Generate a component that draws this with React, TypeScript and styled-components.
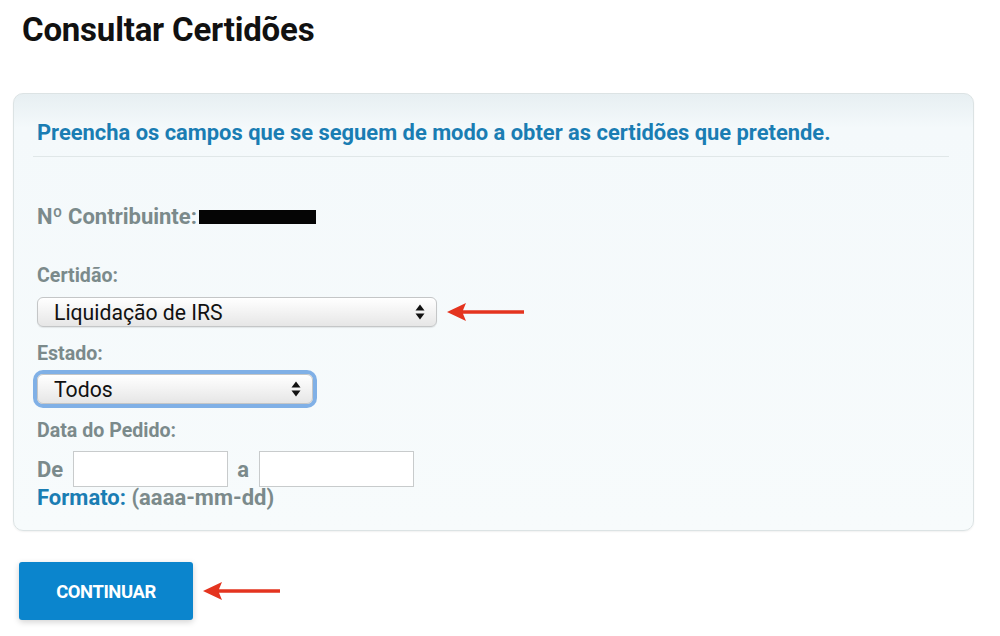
import React from "react";
import styled, { createGlobalStyle } from "styled-components";

const Global = createGlobalStyle`
  html, body { margin: 0; padding: 0; background: #ffffff; }
  body { font-family: Roboto, "Liberation Sans", Arial, sans-serif; }
`;

const Page = styled.div`
  width: 1000px;
  height: 636px;
  box-sizing: border-box;
  padding: 13px 26px 0 13px;
  display: flex;
  flex-direction: column;
  align-items: flex-start;
`;

const Title = styled.h1`
  margin: 0 0 0 9px;
  font-size: 33px;
  line-height: 34px;
  font-weight: 700;
  color: #111;
  letter-spacing: -0.2px;
`;

const Panel = styled.section`
  margin-top: 46px;
  width: 961px;
  height: 438px;
  box-sizing: border-box;
  border: 1px solid #dce3e4;
  border-radius: 10px;
  background: linear-gradient(to bottom, #e7eff2 0px, #f4f9fb 34px, #f7fbfc 100%);
  box-shadow: 0 1px 2px rgba(0, 0, 0, 0.06);
  padding: 27px 24px 0 23px;
  display: flex;
  flex-direction: column;
  align-items: flex-start;
`;

const Intro = styled.p`
  margin: 0;
  font-size: 21.9px;
  line-height: 24px;
  font-weight: 700;
  color: #1a7db3;
`;

const Divider = styled.hr`
  align-self: stretch;
  margin: 11px 0 0 -4px;
  border: 0;
  height: 1px;
  background: #e0e7e8;
`;

const InfoLine = styled.div<{ $mt: number }>`
  margin-top: ${(p) => p.$mt}px;
  display: flex;
  align-items: center;
  font-size: 22px;
  line-height: 22px;
  font-weight: 700;
  color: #7b8a8b;
`;

const Redacted = styled.span`
  display: inline-block;
  width: 117px;
  height: 14px;
  margin-left: 2px;
  background: #050505;
`;

const Label = styled.div<{ $mt: number }>`
  margin-top: ${(p) => p.$mt}px;
  font-size: 19.6px;
  line-height: 22px;
  font-weight: 700;
  color: #7b8a8b;
`;

const SelectRow = styled.div<{ $mt: number }>`
  margin-top: ${(p) => p.$mt}px;
  display: flex;
  align-items: center;
  gap: 10px;
`;

const SelectBox = styled.div<{ $w: number; $focus?: boolean }>`
  width: ${(p) => p.$w}px;
  height: 30px;
  box-sizing: border-box;
  border: 1px solid #c4c6c7;
  border-radius: 6px;
  background: linear-gradient(to bottom, #ffffff 0%, #f4f4f4 45%, #e6e6e6 100%);
  display: flex;
  align-items: center;
  justify-content: space-between;
  padding: 0 11px 0 16px;
  font-size: 21.2px;
  color: #111;
  box-shadow: ${(p) =>
    p.$focus
      ? "0 0 0 4px #80b0e6, inset 0 1px 0 #fff"
      : "0 1px 1px rgba(0,0,0,0.08), inset 0 1px 0 #fff"};
`;

const Arrows = () => (
  <svg width="10" height="16" viewBox="0 0 10 16">
    <path d="M5 0.5 L9.5 6.6 L0.5 6.6 Z" fill="#111" />
    <path d="M0.5 9.4 L9.5 9.4 L5 15.5 Z" fill="#111" />
  </svg>
);

const RedArrow = () => (
  <svg width="78" height="20" viewBox="0 0 78 20">
    <path d="M0 10 L19 1 L16 8.3 L77 8.3 L77 11.7 L16 11.7 L19 19 Z" fill="#e4341f" />
  </svg>
);

const DateRow = styled.div`
  margin-top: 9px;
  display: flex;
  align-items: center;
  height: 36px;
  font-size: 22px;
  font-weight: 700;
  color: #7b8a8b;
`;

const DateInput = styled.div<{ $ml: number }>`
  margin-left: ${(p) => p.$ml}px;
  width: 155px;
  height: 36px;
  box-sizing: border-box;
  border: 1px solid #c8cbcc;
  background: #ffffff;
`;

const Sep = styled.span`
  margin-left: 9px;
`;

const Format = styled.div`
  margin-top: 1px;
  font-size: 22px;
  line-height: 20px;
  font-weight: 700;
  color: #7b8a8b;
`;

const Accent = styled.span`
  color: #1a7db3;
`;

const ButtonRow = styled.div`
  margin: 31px 0 0 6px;
  display: flex;
  align-items: center;
  gap: 10px;
`;

const Button = styled.button`
  width: 174px;
  height: 58px;
  border: 0;
  border-radius: 3px;
  background: #0b85cd;
  color: #ffffff;
  font-family: Roboto, "Liberation Sans", Arial, sans-serif;
  font-size: 18.4px;
  font-weight: 700;
  letter-spacing: -0.4px;
  box-shadow: 0 2px 6px rgba(0, 0, 0, 0.18);
  cursor: pointer;
`;

export default function App() {
  return (
    <>
      <Global />
      <Page>
        <Title>Consultar Certidões</Title>
        <Panel>
          <Intro>Preencha os campos que se seguem de modo a obter as certidões que pretende.</Intro>
          <Divider />
          <InfoLine $mt={49}>
            Nº Contribuinte:<Redacted />
          </InfoLine>
          <Label $mt={37}>Certidão:</Label>
          <SelectRow $mt={10}>
            <SelectBox $w={400}>
              <span>Liquidação de IRS</span>
              <Arrows />
            </SelectBox>
            <RedArrow />
          </SelectRow>
          <Label $mt={16}>Estado:</Label>
          <SelectRow $mt={9}>
            <SelectBox $w={276} $focus>
              <span>Todos</span>
              <Arrows />
            </SelectBox>
          </SelectRow>
          <Label $mt={16}>Data do Pedido:</Label>
          <DateRow>
            De
            <DateInput $ml={10} />
            <Sep>a</Sep>
            <DateInput $ml={10} />
          </DateRow>
          <Format>
            <Accent>Formato:</Accent> (aaaa-mm-dd)
          </Format>
        </Panel>
        <ButtonRow>
          <Button>CONTINUAR</Button>
          <RedArrow />
        </ButtonRow>
      </Page>
    </>
  );
}
